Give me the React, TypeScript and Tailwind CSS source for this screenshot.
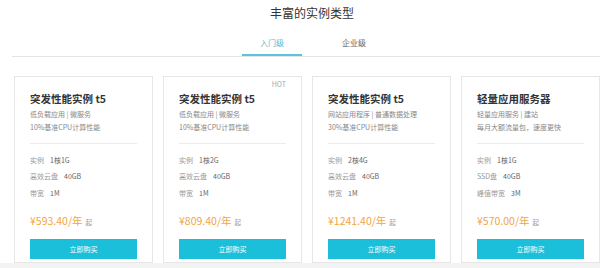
import React from "react";

type Plan = {
  title: string;
  desc: string[];
  specs: [string, string][];
  price: string;
  hot?: boolean;
};

const plans: Plan[] = [
  {
    title: "突发性能实例 t5",
    desc: ["低负载应用 | 微服务", "10%基准CPU计算性能"],
    specs: [["实例", "1核1G"], ["高效云盘", "40GB"], ["带宽", "1M"]],
    price: "593.40",
  },
  {
    title: "突发性能实例 t5",
    desc: ["低负载应用 | 微服务", "10%基准CPU计算性能"],
    specs: [["实例", "1核2G"], ["高效云盘", "40GB"], ["带宽", "1M"]],
    price: "809.40",
    hot: true,
  },
  {
    title: "突发性能实例 t5",
    desc: ["网站应用程序 | 普通数据处理", "30%基准CPU计算性能"],
    specs: [["实例", "2核4G"], ["高效云盘", "40GB"], ["带宽", "1M"]],
    price: "1241.40",
  },
  {
    title: "轻量应用服务器",
    desc: ["轻量应用服务 | 建站", "每月大额流量包，速度更快"],
    specs: [["实例", "1核1G"], ["SSD盘", "40GB"], ["峰值带宽", "3M"]],
    price: "570.00",
  },
];

const PlanCard = ({ plan }: { plan: Plan }) => {
  return (
    <div className="relative w-[139px] h-[187px] shrink-0 border border-[#e6e6e6] bg-white px-[15px] pt-[14px]">
      {plan.hot && (
        <span className="absolute right-[15px] top-[2px] text-[7px] leading-[10px] text-[#aaa]">HOT</span>
      )}
      <h3 className="text-[10.5px] leading-[16px] font-bold text-[#333] whitespace-nowrap">{plan.title}</h3>
      <div className="mt-[0.5px] text-[7px] leading-[13.5px] text-[#888] whitespace-nowrap">
        {plan.desc.map((d) => (
          <p key={d}>{d}</p>
        ))}
      </div>
      <div className="mt-[8px] border-t border-[#ececec]" />
      <div className="mt-[10px] flex flex-col gap-[4.5px] text-[7px] leading-[12px]">
        {plan.specs.map(([k, v]) => (
          <div key={k} className="flex gap-[6px]">
            <span className="text-[#999]">{k}</span>
            <span className="text-[#666]">{v}</span>
          </div>
        ))}
      </div>
      <div className="mt-[14px] flex items-baseline text-[#f2a541]">
        <span className="text-[10.5px] leading-[16px]">¥{plan.price}/年</span>
        <span className="ml-[3px] text-[6.5px] text-[#999]">起</span>
      </div>
      <button className="mt-[10px] w-full h-[20px] bg-[#1cbfda] text-white text-[7px] leading-[20px]">
        立即购买
      </button>
    </div>
  );
};

export default function App() {
  return (
    <div
      className="w-[600px] h-[268px] overflow-hidden bg-white flex flex-col"
      style={{ fontFamily: '"Noto Sans CJK SC", "Noto Sans", sans-serif' }}
    >
      <h1 className="pt-[4px] pl-[24px] text-center text-[12px] leading-[18px] text-[#333]">丰富的实例类型</h1>
      <div className="ml-[12px] mt-[15px] flex gap-[22px] border-b border-[#e4e4e4] pl-[230px]">
        <div className="w-[60px] border-b-2 border-[#5bc3dc] pb-[5px] text-center text-[8px] leading-[12px] text-[#5bb8d0]">
          入门级
        </div>
        <div className="w-[60px] pb-[5px] text-center text-[8px] leading-[12px] text-[#666]">企业级</div>
      </div>
      <div className="mt-[19px] flex gap-[10px] pl-[14px]">
        {plans.map((p, i) => (
          <PlanCard key={i} plan={p} />
        ))}
      </div>
      <div className="flex-1 bg-[#f3f3f3]" />
    </div>
  );
}
